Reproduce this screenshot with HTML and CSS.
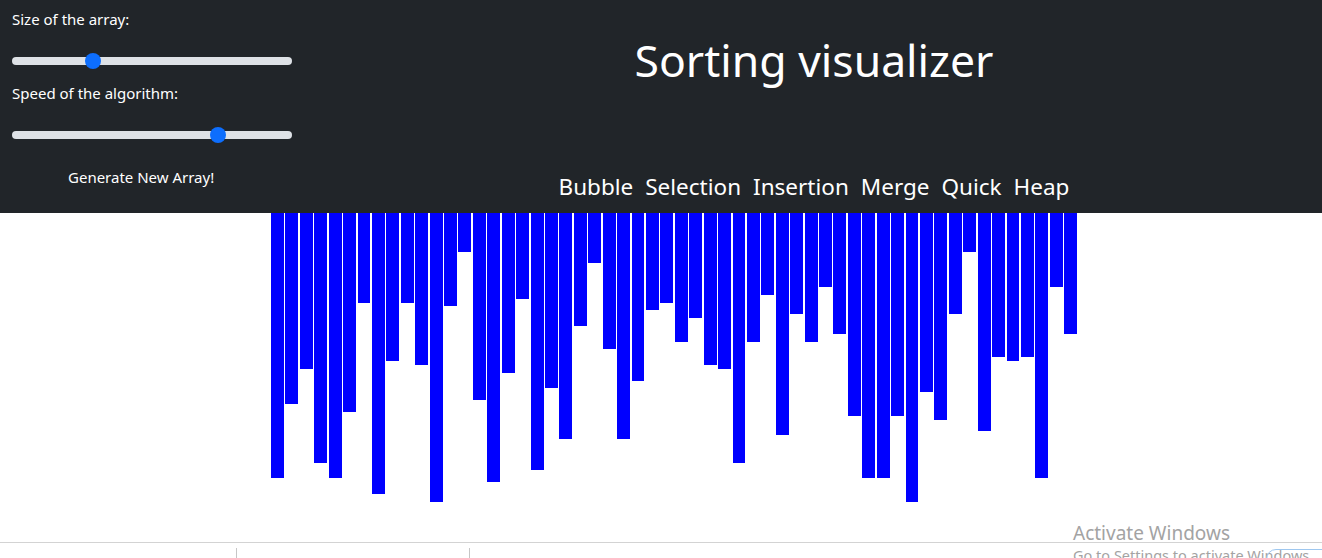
FILE: index.html
```html
<!DOCTYPE html>
<html lang="en">
<head>
<meta charset="utf-8">
<title>Sorting visualizer</title>
<link rel="stylesheet" href="styles.css">
</head>
<body>
<header class="topbar">
  <div class="controls">
    <label class="ctl-label" for="size">Size of the array:</label>
    <input class="range range-size" id="size" type="range" min="0" max="100" step="any" value="27.65">
    <label class="ctl-label ctl-label-2" for="speed">Speed of the algorithm:</label>
    <input class="range range-speed" id="speed" type="range" min="0" max="100" step="any" value="75.1">
    <button class="gen-btn" type="button">Generate New Array!</button>
  </div>
  <div class="main-head">
    <h1 class="title">Sorting visualizer</h1>
    <nav class="algos">
      <button class="algo" type="button">Bubble</button>
      <button class="algo" type="button">Selection</button>
      <button class="algo" type="button">Insertion</button>
      <button class="algo" type="button">Merge</button>
      <button class="algo" type="button">Quick</button>
      <button class="algo" type="button">Heap</button>
    </nav>
  </div>
</header>
<main class="bars-area">
  <div class="bars">
    <div class="bar" style="height:265px"></div>
    <div class="bar" style="height:191px"></div>
    <div class="bar" style="height:156px"></div>
    <div class="bar" style="height:250px"></div>
    <div class="bar" style="height:265px"></div>
    <div class="bar" style="height:199px"></div>
    <div class="bar" style="height:90px"></div>
    <div class="bar" style="height:281px"></div>
    <div class="bar" style="height:148px"></div>
    <div class="bar" style="height:90px"></div>
    <div class="bar" style="height:152px"></div>
    <div class="bar" style="height:289px"></div>
    <div class="bar" style="height:93px"></div>
    <div class="bar" style="height:39px"></div>
    <div class="bar" style="height:187px"></div>
    <div class="bar" style="height:269px"></div>
    <div class="bar" style="height:160px"></div>
    <div class="bar" style="height:86px"></div>
    <div class="bar" style="height:257px"></div>
    <div class="bar" style="height:175px"></div>
    <div class="bar" style="height:226px"></div>
    <div class="bar" style="height:113px"></div>
    <div class="bar" style="height:50px"></div>
    <div class="bar" style="height:136px"></div>
    <div class="bar" style="height:226px"></div>
    <div class="bar" style="height:168px"></div>
    <div class="bar" style="height:97px"></div>
    <div class="bar" style="height:90px"></div>
    <div class="bar" style="height:129px"></div>
    <div class="bar" style="height:105px"></div>
    <div class="bar" style="height:152px"></div>
    <div class="bar" style="height:156px"></div>
    <div class="bar" style="height:250px"></div>
    <div class="bar" style="height:129px"></div>
    <div class="bar" style="height:82px"></div>
    <div class="bar" style="height:222px"></div>
    <div class="bar" style="height:101px"></div>
    <div class="bar" style="height:129px"></div>
    <div class="bar" style="height:74px"></div>
    <div class="bar" style="height:121px"></div>
    <div class="bar" style="height:203px"></div>
    <div class="bar" style="height:265px"></div>
    <div class="bar" style="height:265px"></div>
    <div class="bar" style="height:203px"></div>
    <div class="bar" style="height:289px"></div>
    <div class="bar" style="height:179px"></div>
    <div class="bar" style="height:207px"></div>
    <div class="bar" style="height:101px"></div>
    <div class="bar" style="height:39px"></div>
    <div class="bar" style="height:218px"></div>
    <div class="bar" style="height:144px"></div>
    <div class="bar" style="height:148px"></div>
    <div class="bar" style="height:144px"></div>
    <div class="bar" style="height:265px"></div>
    <div class="bar" style="height:74px"></div>
    <div class="bar" style="height:121px"></div>
  </div>
</main>
<footer class="bottom-strip">
  <div class="cell cell-1"></div>
  <div class="cell cell-2"></div>
  <div class="cell cell-3"></div>
</footer>
<div class="watermark">
  <div class="wm-title">Activate Windows</div>
  <div class="wm-sub">Go to Settings to activate Windows.</div>
</div>
<div class="tray-outline"></div>
</body>
</html>
```

FILE: styles.css
```css
html, body {
  margin: 0;
  padding: 0;
  background: #ffffff;
  font-family: "Noto Sans", "Open Sans", sans-serif;
  overflow: hidden;
}

body {
  width: 1322px;
  height: 558px;
  position: relative;
}

.topbar {
  background: #212529;
  color: #ffffff;
  height: 213px;
  display: flex;
}

.controls {
  width: 306px;
  box-sizing: border-box;
  padding: 7px 0 0 12px;
  display: flex;
  flex-direction: column;
  align-items: flex-start;
}

.ctl-label {
  font-size: 15px;
  line-height: 24px;
  height: 24px;
  display: block;
}

.ctl-label-2 {
  margin-top: 12px;
}

.range {
  -webkit-appearance: none;
  appearance: none;
  display: block;
  width: 280px;
  height: 16px;
  margin: 22px 0 0 0;
  padding: 0;
  background: transparent;
}

.range-speed {
  margin-top: 22px;
}

.range::-webkit-slider-runnable-track {
  height: 8px;
  background: #dee2e6;
  border-radius: 4px;
  border: 0;
}

.range::-webkit-slider-thumb {
  -webkit-appearance: none;
  appearance: none;
  width: 16px;
  height: 16px;
  margin-top: -4px;
  border-radius: 50%;
  background: #0d6efd;
  border: 0;
}

.gen-btn {
  margin: 22px 0 0 56px;
  padding: 0;
  border: 0;
  background: transparent;
  color: #ffffff;
  font-family: inherit;
  font-size: 15px;
  line-height: 24px;
}

.main-head {
  flex: 1;
  display: flex;
  flex-direction: column;
  align-items: center;
}

.title {
  margin: 30px 0 0 0;
  font-weight: 400;
  font-size: 44.5px;
  line-height: 60px;
}

.algos {
  margin-top: 82px;
  display: flex;
  gap: 12px;
}

.algo {
  padding: 0;
  border: 0;
  background: transparent;
  color: #ffffff;
  font-family: inherit;
  font-size: 22.5px;
  line-height: 30px;
}

.bars-area {
  height: 329px;
  box-sizing: border-box;
  padding-left: 271px;
}

.bars {
  width: 806px;
  display: flex;
  align-items: flex-start;
  gap: 1.5px;
}

.bar {
  flex: 1;
  background: #0000ff;
}

.bottom-strip {
  border-top: 1px solid #d3d3d3;
  height: 15px;
  box-sizing: border-box;
  padding-top: 5px;
  display: flex;
}

.cell {
  height: 10px;
}

.cell-1 {
  width: 236px;
  border-right: 1px solid #c6c6c6;
}

.cell-2 {
  width: 232px;
  border-right: 1px solid #c6c6c6;
}

.watermark {
  position: absolute;
  left: 1073px;
  top: 521px;
  color: #a3a3a3;
  font-family: "Noto Sans", "Open Sans", sans-serif;
  white-space: nowrap;
}

.wm-title {
  font-size: 19px;
  line-height: 24px;
}

.wm-sub {
  font-size: 14.5px;
  line-height: 20px;
  margin-top: 0;
}

.tray-outline {
  position: absolute;
  left: 1266px;
  top: 549px;
  width: 80px;
  height: 20px;
  border: 1px solid #9ec7ef;
  border-radius: 10px;
}
```
